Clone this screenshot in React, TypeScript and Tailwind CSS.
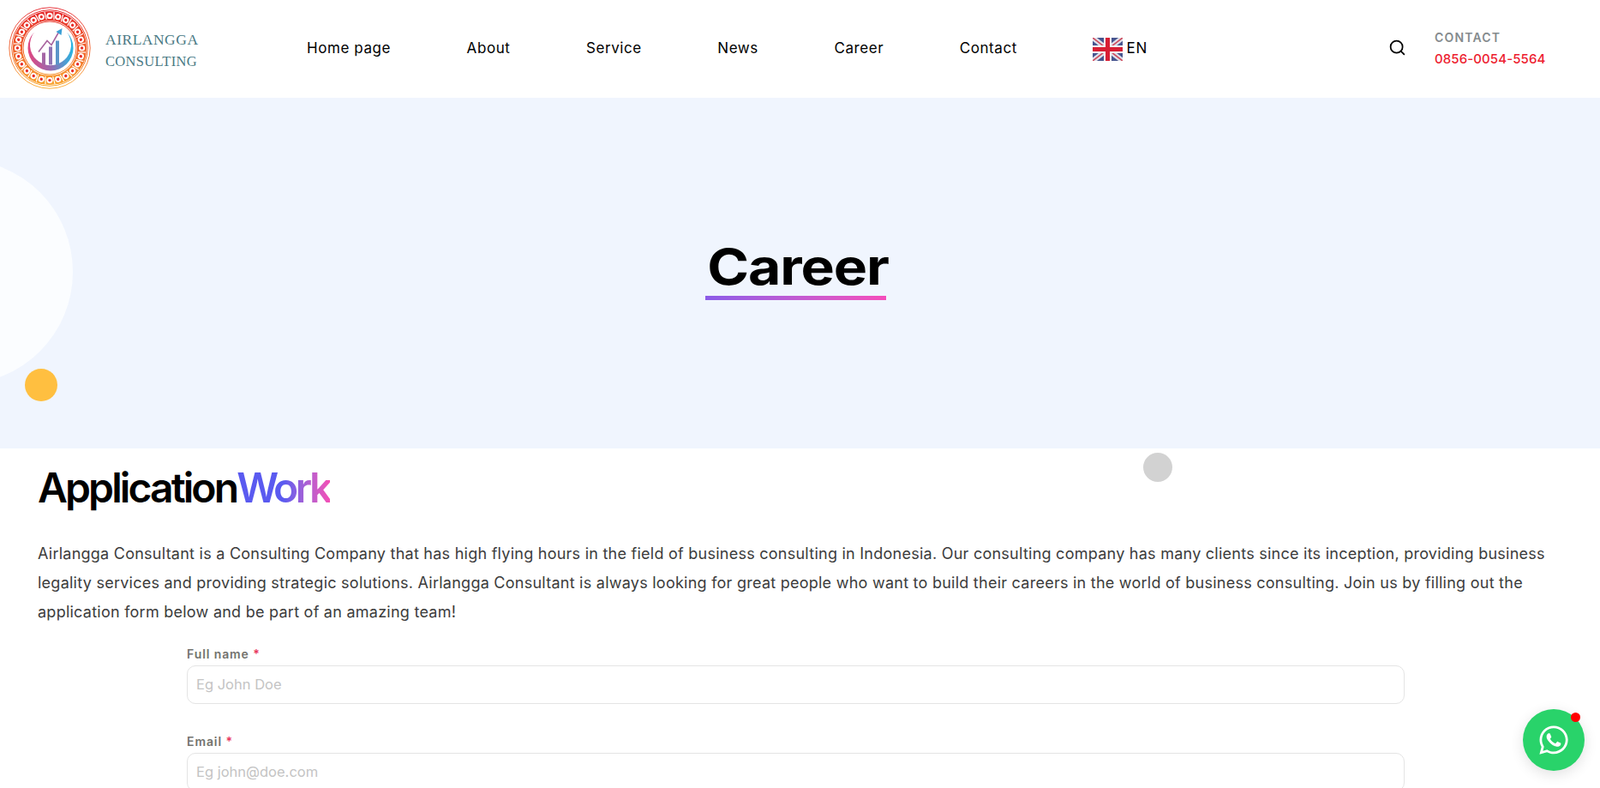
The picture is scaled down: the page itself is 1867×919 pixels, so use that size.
import { Search } from "lucide-react";
import { FaWhatsapp } from "react-icons/fa";

const navLinks = ["Home page", "About", "Service", "News", "Career", "Contact"];

function Logo() {
  const links = Array.from({ length: 24 }, (_, i) => i * 15);
  return (
    <svg width="98" height="98" viewBox="0 0 98 98" className="mt-[-3px] shrink-0">
      <defs>
        <linearGradient id="ring" gradientUnits="userSpaceOnUse" x1="48" y1="1" x2="48" y2="97">
          <stop offset="0" stopColor="#e4202a" />
          <stop offset="0.5" stopColor="#f0602a" />
          <stop offset="1" stopColor="#f9ac2e" />
        </linearGradient>
        <linearGradient id="swoosh" gradientUnits="userSpaceOnUse" x1="22" y1="50" x2="75" y2="50">
          <stop offset="0" stopColor="#e2457f" />
          <stop offset="0.5" stopColor="#9c68ae" />
          <stop offset="1" stopColor="#27b5e2" />
        </linearGradient>
      </defs>
      <circle cx="48" cy="49" r="47.2" fill="none" stroke="url(#ring)" strokeWidth="0.9" />
      <circle cx="48" cy="49" r="44.3" fill="none" stroke="url(#ring)" strokeWidth="1" />
      <circle cx="48" cy="49" r="31" fill="none" stroke="url(#ring)" strokeWidth="1" />
      <circle cx="48" cy="49" r="37.6" fill="none" stroke="url(#ring)" strokeWidth="11" />
      {links.map((t) => (
        <g key={t} transform={`rotate(${t} 48 49)`}>
          <circle cx="48" cy="11.4" r="3.6" fill="#fff" />
          <circle cx="48" cy="11.4" r="1.7" fill="url(#ring)" />
          <rect x="52.4" y="7" width="1.2" height="9" fill="#fff" />
        </g>
      ))}
      <path d="M30 30.5 A26.5 26.5 0 1 0 68 30.5 A24 24 0 1 1 30 30.5Z" fill="url(#swoosh)" />
      <rect x="39" y="54.5" width="4" height="14" fill="#a567a6" />
      <rect x="47" y="47.5" width="4" height="21" fill="#8f74b5" />
      <rect x="55" y="40.5" width="4" height="28" fill="#5b95c9" />
      <path d="M35 53.5 L45 40.5 L50 45.5 L58.5 30.5" fill="none" stroke="#a8649f" strokeWidth="1.6" />
      <path d="M55.5 30 L62.5 26 L61.5 34Z" fill="#3b9fd6" />
    </svg>
  );
}

function UkFlag() {
  return (
    <svg width="35" height="27" viewBox="0 0 35 27" className="shrink-0">
      <rect width="35" height="27" fill="#46558f" />
      <path d="M0 0 L35 27 M35 0 L0 27" stroke="#dfe0ea" strokeWidth="6" />
      <path d="M0 0 L35 27 M35 0 L0 27" stroke="#cf4a5c" strokeWidth="1.6" />
      <path d="M17.5 0 V27 M0 13.5 H35" stroke="#f2f2f6" strokeWidth="9" />
      <path d="M17.5 0 V27 M0 13.5 H35" stroke="#d81e34" strokeWidth="5" />
    </svg>
  );
}

function Field({ label, placeholder }: { label: string; placeholder: string }) {
  return (
    <div className="mb-[34px]">
      <label className="mb-[3px] block text-[14px] leading-[20px] font-semibold tracking-[0.9px] text-[#73736e]">
        {label} <span className="text-[#e8365d]">*</span>
      </label>
      <input
        placeholder={placeholder}
        className="h-[45px] w-full rounded-[10px] border border-[#e4e4e4] bg-white px-[10px] text-[16.5px] text-black outline-none placeholder:text-[#c4c4c4]"
      />
    </div>
  );
}

export default function App() {
  return (
    <div className="relative h-[919px] overflow-hidden bg-white font-['Inter',sans-serif]">
      {/* Navbar */}
      <nav className="flex h-[114px] items-center bg-white">
        <div className="flex w-[358px] items-center pl-[10px]">
          <Logo />
          <div className="mt-[3px] ml-[15px] font-['Liberation_Serif',serif] leading-[25px] text-[#4a7a85]">
            <div className="text-[17.5px] tracking-[0.5px]">AIRLANGGA</div>
            <div className="text-[16.5px] tracking-[0.3px]">CONSULTING</div>
          </div>
        </div>
        <div className="flex items-center gap-[88.5px] text-[17px] tracking-[0.58px] text-black">
          {navLinks.map((link) => (
            <a key={link} href="#" className="whitespace-nowrap">
              {link}
            </a>
          ))}
          <div className="flex items-center gap-[4px]">
            <UkFlag />
            <span className="tracking-[1px]">EN</span>
          </div>
        </div>
        <div className="ml-auto flex items-center pr-[63px]">
          <Search className="mt-[-3px] mr-[33px] h-[21px] w-[21px] text-black" strokeWidth={2} />
          <div className="mt-[-2px] w-[130px]">
            <div className="text-[14px] leading-[22px] font-semibold tracking-[1.2px] text-[#858b8e]">CONTACT</div>
            <div className="mt-[3px] text-[15px] leading-[22px] font-medium tracking-[0.1px] whitespace-nowrap text-[#ed1c2e]">
              0856-0054-5564
            </div>
          </div>
        </div>
      </nav>

      {/* Hero */}
      <section className="relative flex h-[409px] items-center justify-center bg-[#f0f5fe]">
        <div className="absolute top-[72px] left-[-177px] h-[262px] w-[262px] rounded-full bg-[#fbfdff]" />
        <div className="absolute top-[316px] left-[29px] h-[38px] w-[38px] rounded-full bg-[#ffbf40]" />
        <div className="mt-[-11px] ml-[-9px] flex w-[212px] flex-col">
          <h1 className="translate-x-[2px] scale-x-[1.14] text-center text-[58px] leading-[70px] font-bold tracking-[-1px] text-black">
            Career
          </h1>
          <div className="mt-[-1px] h-[5px] w-[211px] bg-gradient-to-r from-[#8b5be8] to-[#f54dbb]" />
        </div>
      </section>

      {/* Application form */}
      <div className="absolute top-[528px] left-[1334px] h-[34px] w-[34px] rounded-full bg-[#d2d2d2]" />
      <section className="px-[44px] pt-[17px]">
        <h2 className="text-[48px] leading-[58px] font-semibold tracking-[-2.9px] text-black">
          Application
          <span className="bg-gradient-to-r from-[#5a5af0] from-50% to-[#f54db5] bg-clip-text tracking-[-3.6px] text-transparent">
            Work
          </span>
        </h2>
        <p className="mt-[31px] text-[18px] leading-[34.2px] font-normal tracking-[0.25px] text-[#3c3c3c]">
          Airlangga Consultant is a Consulting Company that has high flying hours in the field of business consulting in
          Indonesia. Our consulting company has many clients since its inception, providing business legality services and
          providing strategic solutions. Airlangga Consultant is always looking for great people who want to build their
          careers in the world of business consulting. Join us by filling out the application form below and be part of an
          amazing team!
        </p>
        <form className="mt-[21px] ml-[174px] w-[1421px]">
          <Field label="Full name" placeholder="Eg John Doe" />
          <Field label="Email" placeholder="Eg john@doe.com" />
        </form>
      </section>

      {/* WhatsApp button */}
      <a
        href="#"
        className="fixed right-[18px] bottom-[20px] flex h-[72px] w-[72px] items-center justify-center rounded-full bg-[#29d36a] shadow-[0_4px_16px_rgba(0,0,0,0.12)]"
      >
        <FaWhatsapp className="h-[38px] w-[38px] text-white" />
        <span className="absolute top-[4px] right-[5px] h-[11px] w-[11px] rounded-full bg-[#ff0000]" />
      </a>
    </div>
  );
}
